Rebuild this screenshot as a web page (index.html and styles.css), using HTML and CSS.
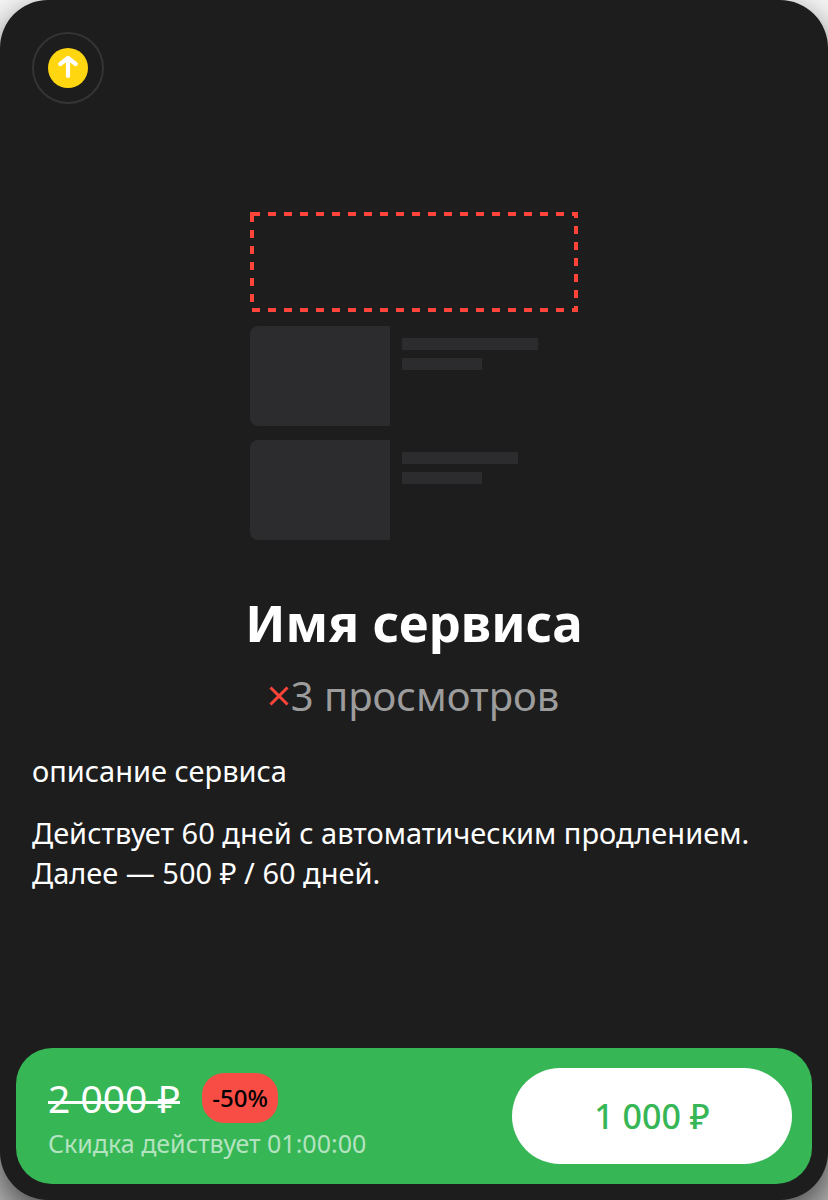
FILE: index.html
```html
<!DOCTYPE html>
<html lang="ru">
<head>
<meta charset="utf-8">
<meta name="viewport" content="width=device-width, initial-scale=1">
<title>Имя сервиса</title>
<link rel="stylesheet" href="styles.css">
</head>
<body>
<main class="card">
  <header class="card-header">
    <button class="icon-button" type="button" aria-label="Поднять">
      <svg width="40" height="40" viewBox="0 0 40 40" aria-hidden="true">
        <circle cx="20" cy="20" r="20" fill="#ffd60f"/>
        <path d="M20 28V10.500M12.300 16L20 10L27.700 16" fill="none" stroke="#fff" stroke-width="4.200" stroke-linecap="round" stroke-linejoin="round"/>
      </svg>
    </button>
  </header>
  <section class="preview" aria-hidden="true">
    <svg class="highlight" width="328" height="100" viewBox="0 0 328 100">
      <rect x="2" y="2" width="324" height="96" fill="none" stroke="#ff453a" stroke-width="4" stroke-dasharray="8 8"/>
    </svg>
    <div class="listing">
      <div class="thumb"></div>
      <div class="lines"><div class="line line-long"></div><div class="line"></div></div>
    </div>
    <div class="listing">
      <div class="thumb"></div>
      <div class="lines"><div class="line line-medium"></div><div class="line"></div></div>
    </div>
  </section>
  <h1 class="title">Имя сервиса</h1>
  <p class="views">
    <svg width="20" height="20" viewBox="0 0 20 20" aria-hidden="true"><path d="M1.500 1.500L18.500 18.500M18.500 1.500L1.500 18.500" stroke="#ff453a" stroke-width="3"/></svg>
    <span>3 просмотров</span>
  </p>
  <div class="description">
    <p>описание сервиса</p>
    <p>Действует 60 дней с автоматическим продлением. Далее — 500 ₽ / 60 дней.</p>
  </div>
  <footer class="offer">
    <div class="offer-info">
      <div class="price-row"><s class="old-price">2 000 ₽</s><span class="badge">-50%</span></div>
      <p class="timer">Скидка действует 01:00:00</p>
    </div>
    <button class="buy" type="button">1 000 ₽</button>
  </footer>
</main>
</body>
</html>
```
FILE: styles.css
```css
* { box-sizing: border-box; }
body {
  margin: 0;
  background: linear-gradient(#f6f6f6, #b4b4b4);
  font-family: "Noto Sans", sans-serif;
  color: #fff;
}
h1, p { margin: 0; }
button { font: inherit; border: 0; cursor: pointer; }
.card {
  display: flex;
  flex-direction: column;
  min-height: 100vh;
  padding: 32px 16px 16px;
  border-radius: 48px;
  background: #1d1d1e;
  box-shadow: 0 12px 32px rgba(0, 0, 0, 0.6);
}
.card-header { padding: 0 16px; }
.icon-button {
  display: flex;
  align-items: center;
  justify-content: center;
  width: 72px;
  height: 72px;
  padding: 0;
  border: 2px solid #343436;
  border-radius: 50%;
  background: transparent;
}
.preview {
  display: flex;
  flex-direction: column;
  gap: 14px;
  width: 328px;
  margin: 108px auto 0;
}
.highlight { display: block; }
.listing { display: flex; gap: 12px; }
.thumb {
  width: 140px;
  height: 100px;
  border-radius: 8px 0 0 8px;
  background: #2c2c2e;
}
.lines {
  display: flex;
  flex-direction: column;
  gap: 8px;
  padding-top: 12px;
}
.line { width: 80px; height: 12px; background: #2c2c2e; }
.line-long { width: 136px; }
.line-medium { width: 116px; }
.title {
  margin-top: 50px;
  font-size: 51px;
  line-height: 64px;
  font-weight: 700;
  text-align: center;
}
.views {
  display: flex;
  align-items: center;
  justify-content: center;
  gap: 2px;
  margin-top: 18px;
  font-size: 40px;
  line-height: 48px;
  color: #9c9c9c;
}
.description {
  display: flex;
  flex-direction: column;
  gap: 22px;
  padding: 31px 16px;
  font-size: 29px;
  line-height: 40px;
}
.offer {
  display: flex;
  align-items: center;
  justify-content: space-between;
  min-height: 136px;
  margin-top: auto;
  padding: 20px 20px 20px 32px;
  border-radius: 36px;
  background: #37b656;
}
.offer-info { padding-top: 4px; }
.price-row { display: flex; align-items: center; gap: 22px; }
.old-price {
  background: linear-gradient(#fff, #fff) 0 28px / 100% 3px no-repeat;
  font-size: 39px;
  line-height: 50px;
  text-decoration: none;
}
.badge {
  padding: 0 10px;
  border-radius: 22px;
  background: #f84d45;
  color: #000;
  font-size: 24px;
  line-height: 50px;
  font-weight: 500;
}
.timer {
  font-size: 25px;
  line-height: 40px;
  color: #b4e3c0;
}
.buy {
  width: 280px;
  height: 96px;
  border-radius: 48px;
  background: #fff;
  color: #37b656;
  font-size: 34px;
  font-weight: 500;
}
```
